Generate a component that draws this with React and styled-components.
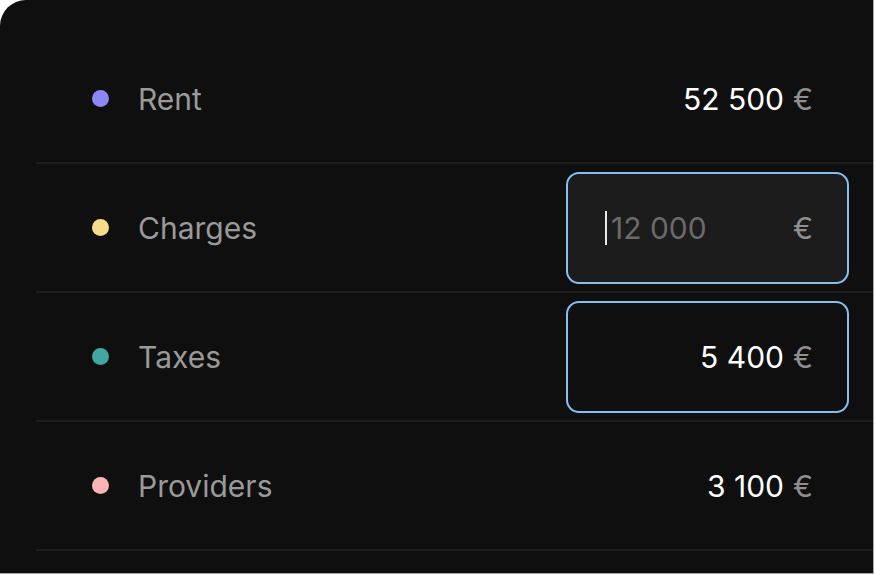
import React from 'react';
import styled, { createGlobalStyle } from 'styled-components';

const GlobalStyle = createGlobalStyle`
  html, body {
    margin: 0;
    padding: 0;
    background: #b5b5b5;
  }
  body {
    font-family: Inter, "Noto Sans", sans-serif;
  }
`;

const Page = styled.div`
  width: 875px;
  height: 575px;
  background: #ffffff;
  overflow: hidden;
`;

const Card = styled.div`
  width: 874px;
  height: 574px;
  box-sizing: border-box;
  background: #0f0f0f;
  border-top-left-radius: 26px;
  border-right: 1px solid #a8a8a8;
  border-bottom: 1px solid #a8a8a8;
  padding: 35px 0 0 36px;
  display: flex;
  flex-direction: column;
`;

const Row = styled.div`
  height: 127px;
  display: flex;
  align-items: center;
  border-bottom: 2px solid #1e1e1e;
  padding: 0 24px 0 56px;
`;

const Dot = styled.span`
  width: 17px;
  height: 17px;
  border-radius: 50%;
  background: ${(p) => p.color};
  flex-shrink: 0;
`;

const Label = styled.span`
  margin-left: 29px;
  font-size: 30px;
  color: #9a9a9a;
  flex: 1;
`;

const Amount = styled.div`
  display: flex;
  align-items: center;
  justify-content: flex-end;
  width: 283px;
  height: 112px;
  box-sizing: border-box;
  padding: 0 34px 0 37px;
  font-size: 30px;
  color: #ffffff;
  border-radius: 13px;
  border: 2px solid ${(p) => (p.boxed ? '#84bff0' : 'transparent')};
  background: ${(p) => (p.editing ? '#1c1c1c' : 'transparent')};
`;

const Currency = styled.span`
  color: #8f8f8f;
  margin-left: 9px;
`;

const Placeholder = styled.span`
  flex: 1;
  display: flex;
  align-items: center;
  color: #6a6a6a;
`;

const Caret = styled.span`
  width: 2px;
  height: 34px;
  background: #e8e8e8;
  margin-right: 4px;
`;

const rows = [
  { label: 'Rent', color: '#8b87f7', value: '52 500' },
  { label: 'Charges', color: '#f6dc88', placeholder: '12 000', editing: true },
  { label: 'Taxes', color: '#42a7a0', value: '5 400', boxed: true },
  { label: 'Providers', color: '#fdb3b5', value: '3 100' },
];

export default function App() {
  return (
    <Page>
      <GlobalStyle />
      <Card>
        {rows.map((r) => (
          <Row key={r.label}>
            <Dot color={r.color} />
            <Label>{r.label}</Label>
            <Amount boxed={r.boxed || r.editing} editing={r.editing}>
              {r.editing ? (
                <Placeholder>
                  <Caret />
                  {r.placeholder}
                </Placeholder>
              ) : (
                r.value
              )}
              <Currency>€</Currency>
            </Amount>
          </Row>
        ))}
      </Card>
    </Page>
  );
}
